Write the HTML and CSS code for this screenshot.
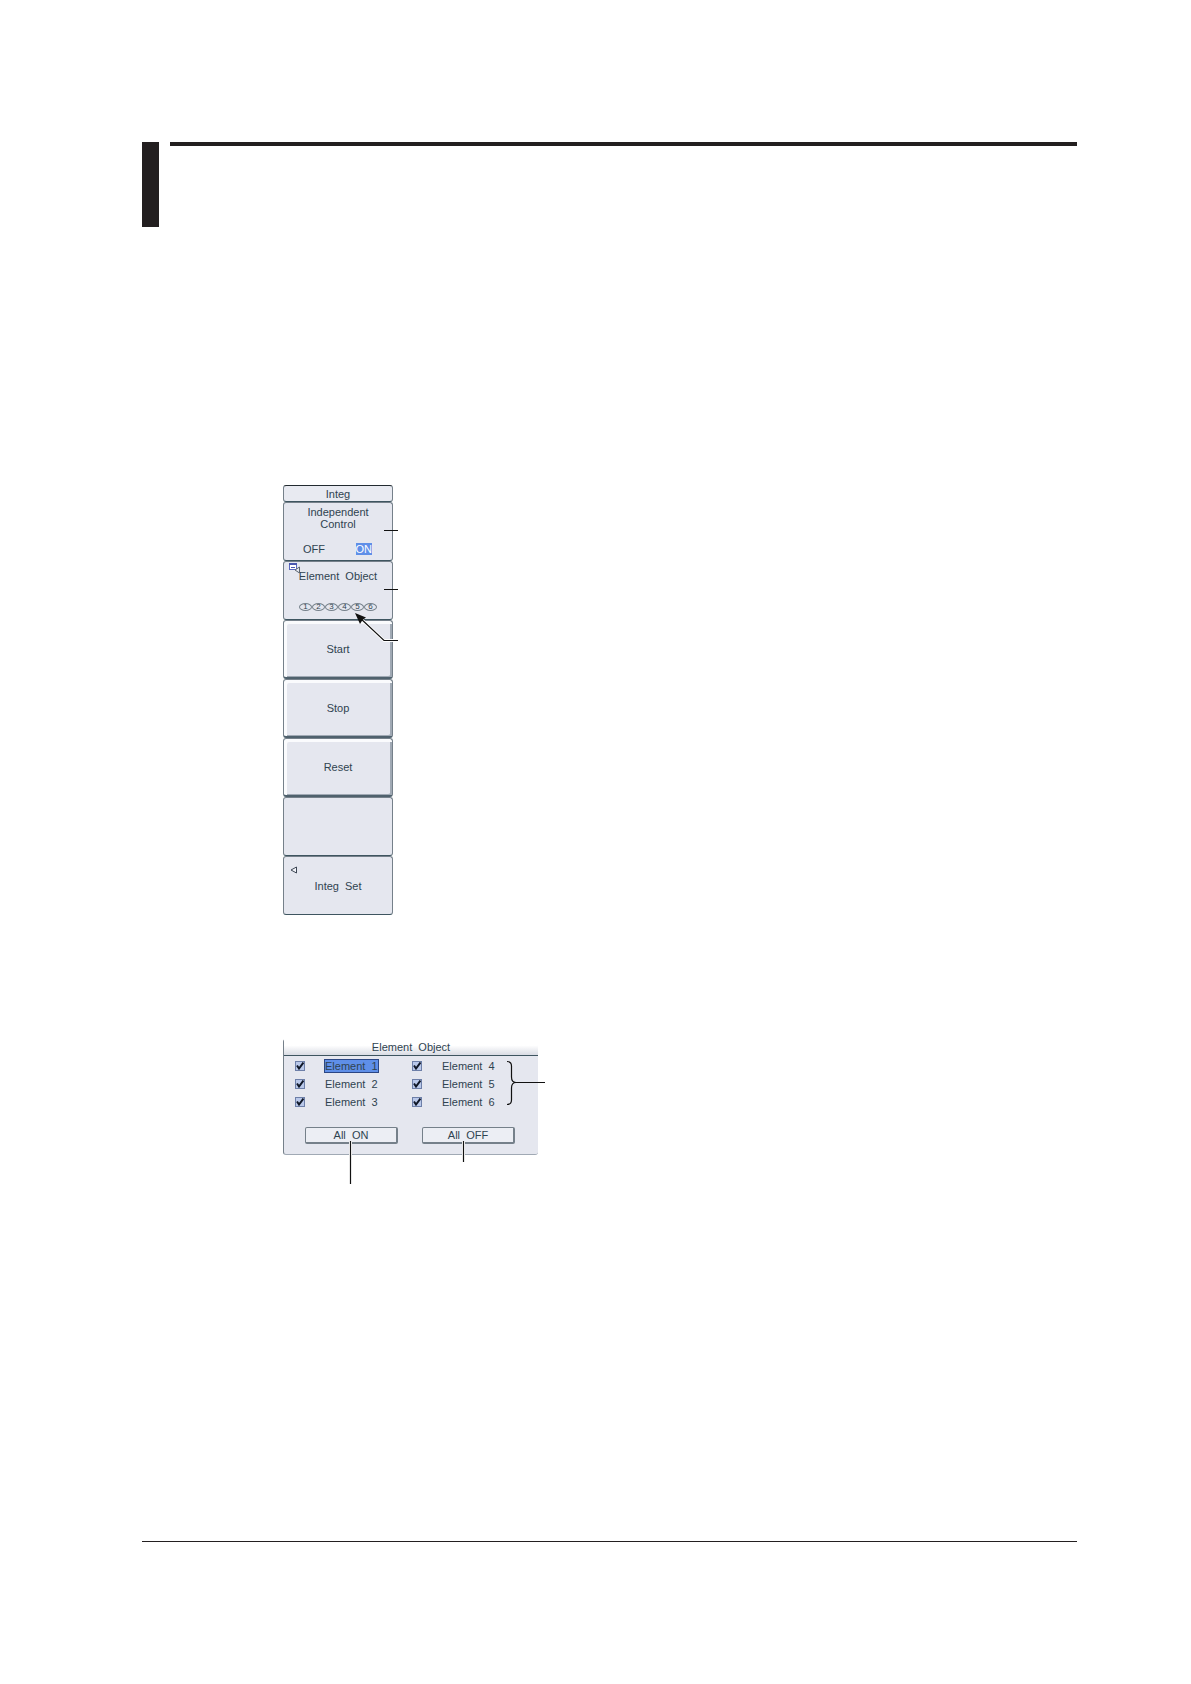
FILE: index.html
```html
<!DOCTYPE html>
<html lang="en">
<head>
  <meta charset="UTF-8" />
  <meta name="viewport" content="width=device-width, initial-scale=1" />
  <title>Integ - Element Object</title>
  <link rel="stylesheet" href="styles.css">
</head>
<body>
  <header class="page-head">
    <div class="tab"></div>
    <div class="rule"></div>
  </header>

  <main class="figures">
    <section class="menu">
      <h2 class="menu-title">Integ</h2>
      <fieldset class="cell toggle">
        <legend class="toggle-name">Independent<br>Control</legend>
        <div class="toggle-options">
          <label><input type="radio" name="independent"><span>OFF</span></label>
          <label><input type="radio" name="independent" checked><span>ON</span></label>
        </div>
      </fieldset>
      <button class="cell element-cell" type="button">
        <svg class="popup-icon" width="12" height="11" viewBox="0 0 12 11">
          <rect x="0.500" y="0.500" width="7" height="6" fill="#fff" stroke="#5a68c0" />
          <path d="M0 1H8" stroke="#4a58b0" stroke-width="2" />
          <path d="M2 4.500H6" stroke="#4a58b0" />
          <path d="M6 7L10.500 4V10Z" fill="#e8eaf2" stroke="#5b6570" />
        </svg>
        <span>Element&nbsp; Object</span>
        <span class="numbers"><i>1</i><i>2</i><i>3</i><i>4</i><i>5</i><i>6</i></span>
      </button>
      <button class="cell raised" type="button">Start</button>
      <button class="cell raised" type="button">Stop</button>
      <button class="cell raised" type="button">Reset</button>
      <div class="cell"></div>
      <button class="cell" type="button">
        <svg class="back-icon" width="8" height="8" viewBox="0 0 8 8">
          <path d="M1 4L6.500 1V7Z" fill="#f4f5fa" stroke="#3c4654" />
        </svg>
        <span>Integ&nbsp; Set</span>
      </button>
      <!-- leader lines -->
      <svg class="leaders" width="116" height="170" viewBox="0 0 116 170">
        <path d="M76 132L101 155.500H115" fill="none" stroke="#fff" stroke-width="3" />
        <path d="M101 45.500H115M101 104.500H115M76 132L101 155.500H115" fill="none" stroke="#111" stroke-width="1.200" />
        <path d="M72 128L83 132.500L79.500 135L77 139Z" fill="#111" />
      </svg>
    </section>

    <section class="dialog">
      <h2 class="dialog-title">Element&nbsp; Object</h2>
      <div class="elements">
        <label><input type="checkbox" checked><span class="selected">Element&nbsp; 1</span></label>
        <label><input type="checkbox" checked><span>Element&nbsp; 2</span></label>
        <label><input type="checkbox" checked><span>Element&nbsp; 3</span></label>
        <label><input type="checkbox" checked><span>Element&nbsp; 4</span></label>
        <label><input type="checkbox" checked><span>Element&nbsp; 5</span></label>
        <label><input type="checkbox" checked><span>Element&nbsp; 6</span></label>
      </div>
      <div class="actions">
        <button type="button">All&nbsp; ON</button>
        <button type="button">All&nbsp; OFF</button>
      </div>
      <!-- bracket and leader lines -->
      <svg class="leaders" width="262" height="146" viewBox="0 0 262 146">
        <path d="M66.500 102V145M179.500 102V123" fill="none" stroke="#fff" stroke-width="3" />
        <path d="M223 22.500Q227.500 22.500 227.500 27V38Q227.500 43.500 232 43.500Q227.500 43.500 227.500 49V61Q227.500 65.500 223 65.500M232 43.500H261M66.500 102V145M179.500 102V123" fill="none" stroke="#111" stroke-width="1.200" />
      </svg>
    </section>
  </main>

  <footer class="page-foot"></footer>
</body>
</html>
```
FILE: styles.css
```css
* {
  box-sizing: border-box;
}
body {
  margin: 0;
  padding: 142px 114px 142px 142px;
  min-height: 100vh;
  display: flex;
  flex-direction: column;
  background: #fff;
  color: #2f4350;
  font-family: "Liberation Sans", Arial, sans-serif;
  font-size: 11px;
  line-height: 12px;
}
button {
  font: inherit;
  color: inherit;
  cursor: pointer;
}
h2 {
  margin: 0;
  font-size: 11px;
  font-weight: normal;
  text-align: center;
}
.page-head {
  display: flex;
  gap: 11px;
}
.tab {
  width: 17px;
  height: 85px;
  background: #231f20;
}
.rule {
  flex: 1;
  height: 4px;
  background: #231f20;
}
.figures {
  flex: 1;
  padding: 258px 0 0 141px;
}
.page-foot {
  border-top: 1px solid #231f20;
}

/* soft key menu */
.menu {
  position: relative;
  width: 110px;
}
.menu-title {
  height: 17px;
  line-height: 16px;
  background: #e8eaf1;
  border: 1px solid #75808a;
  border-top-color: #222a30;
  border-bottom-color: #3e5560;
  border-radius: 3px;
}
.cell {
  position: relative;
  display: flex;
  flex-direction: column;
  align-items: center;
  justify-content: center;
  width: 100%;
  height: 59px;
  margin: 0;
  padding: 0;
  background: #e5e7ef;
  border: 1px solid #75808a;
  border-bottom-color: #3e5560;
  border-radius: 3px;
}
.raised {
  border-bottom: 2px solid #4f616d;
  box-shadow: inset 3px 3px #fafbfd, inset -2px -1px #a0a9b4;
}
.toggle {
  display: block;
}
.toggle-name {
  float: left;
  width: 100%;
  padding: 3px 0 0;
  text-align: center;
}
.toggle-options {
  clear: both;
  display: flex;
  justify-content: space-between;
  padding: 13px 20px 0 19px;
}
.toggle-options input {
  position: absolute;
  opacity: 0;
  margin: 0;
}
.toggle-options span {
  display: block;
}
.toggle-options input:checked + span {
  background: #5f8fe8;
  color: #fff;
}
.element-cell {
  justify-content: flex-start;
  padding-top: 8px;
  gap: 21px;
}
.popup-icon {
  position: absolute;
  left: 5px;
  top: 1px;
}
.back-icon {
  position: absolute;
  left: 6px;
  top: 9px;
}
.numbers {
  display: flex;
}
.numbers i {
  width: 13px;
  height: 8px;
  border: 1px solid #75808a;
  border-radius: 50%;
  font-size: 8px;
  font-style: normal;
  line-height: 6px;
}
.leaders {
  position: absolute;
  left: 0;
  top: 0;
  pointer-events: none;
}

/* element dialog */
.dialog {
  position: relative;
  width: 255px;
  height: 116px;
  margin-top: 124px;
  background: #e5e7ef;
  border-left: 1px solid #75808a;
  border-bottom: 1px solid #a0a9b4;
  border-radius: 3px;
}
.dialog-title {
  height: 17px;
  line-height: 16px;
  background: linear-gradient(#fff 40%, #d9dce4);
  border-bottom: 1px solid #3e5560;
}
.elements {
  display: grid;
  grid-template-rows: repeat(3, 14px);
  grid-auto-flow: column;
  grid-auto-columns: 117px;
  row-gap: 4px;
  padding: 3px 0 0 11px;
}
.elements label {
  display: flex;
  align-items: center;
  gap: 19px;
}
.elements input {
  appearance: none;
  width: 10px;
  height: 10px;
  margin: 0;
  border: 1px solid #6d7fa8;
  background: #b9c8ea;
}
.elements input:checked {
  background: #b9c8ea url("data:image/svg+xml,%3Csvg xmlns='http://www.w3.org/2000/svg' viewBox='0 0 8 8'%3E%3Cpath d='M1 3.500L3 6.500L7.500 0.500' fill='none' stroke='%23101828' stroke-width='2'/%3E%3C/svg%3E");
}
.elements span {
  border: 1px solid transparent;
}
.elements .selected {
  background: #5f8fe8;
  border-color: #2b4684;
}
.actions {
  display: flex;
  gap: 24px;
  padding: 18px 0 0 21px;
}
.actions button {
  width: 93px;
  height: 17px;
  padding: 0;
  background: #eceef4;
  border: 1px solid #75808a;
  border-right-width: 2px;
  border-bottom-width: 2px;
  border-radius: 2px;
}
```
